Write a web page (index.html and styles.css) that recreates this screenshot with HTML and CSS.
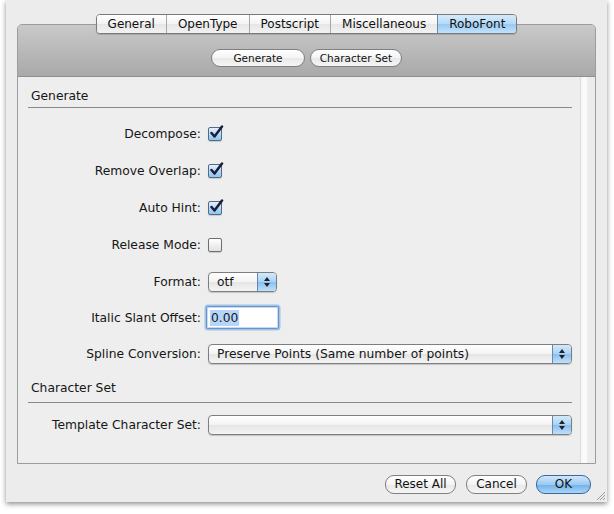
FILE: index.html
```html
<!DOCTYPE html>
<html>
<head>
<meta charset="utf-8">
<link rel="stylesheet" href="styles.css">
</head>
<body>
<div class="window">
  <div class="tabview">
    <div class="header">
      <div class="tabs">
        <span class="tab">General</span>
        <span class="tab">OpenType</span>
        <span class="tab">Postscript</span>
        <span class="tab">Miscellaneous</span>
        <span class="tab sel">RoboFont</span>
      </div>
      <div class="subtabs">
        <span class="pill gen">Generate</span>
        <span class="pill cset">Character Set</span>
      </div>
    </div>
    <div class="body">
      <div class="main">
        <div class="section-title">Generate</div>
        <div class="form">
          <div class="row"><span class="label">Decompose:</span><span class="check on"><svg viewBox="0 0 16 16" width="16" height="16"><path d="M3.5 8 L6.5 11.5 L14 1.5" fill="none" stroke="#1d1d3a" stroke-width="2.5" stroke-linecap="round" stroke-linejoin="round"/></svg></span></div>
          <div class="row"><span class="label">Remove Overlap:</span><span class="check on"><svg viewBox="0 0 16 16" width="16" height="16"><path d="M3.5 8 L6.5 11.5 L14 1.5" fill="none" stroke="#1d1d3a" stroke-width="2.5" stroke-linecap="round" stroke-linejoin="round"/></svg></span></div>
          <div class="row"><span class="label">Auto Hint:</span><span class="check on"><svg viewBox="0 0 16 16" width="16" height="16"><path d="M3.5 8 L6.5 11.5 L14 1.5" fill="none" stroke="#1d1d3a" stroke-width="2.5" stroke-linecap="round" stroke-linejoin="round"/></svg></span></div>
          <div class="row"><span class="label">Release Mode:</span><span class="check"></span></div>
          <div class="row r-format"><span class="label">Format:</span><span class="popup small"><span class="ptext">otf</span><span class="stepper"><svg viewBox="0 0 8 12" width="8" height="12"><path d="M4 1 L7 5 L1 5 Z M4 11 L7 7 L1 7 Z" fill="#222"/></svg></span></span></div>
          <div class="row r-offset"><span class="label">Italic Slant Offset:</span><span class="field"><span class="sel-text">0.00</span></span></div>
          <div class="row r-spline"><span class="label">Spline Conversion:</span><span class="popup wide"><span class="ptext">Preserve Points (Same number of points)</span><span class="stepper"><svg viewBox="0 0 8 12" width="8" height="12"><path d="M4 1 L7 5 L1 5 Z M4 11 L7 7 L1 7 Z" fill="#222"/></svg></span></span></div>
        </div>
        <div class="section-title cs">Character Set</div>
        <div class="form">
          <div class="row r-template"><span class="label">Template Character Set:</span><span class="popup wide"><span class="ptext"></span><span class="stepper"><svg viewBox="0 0 8 12" width="8" height="12"><path d="M4 1 L7 5 L1 5 Z M4 11 L7 7 L1 7 Z" fill="#222"/></svg></span></span></div>
        </div>
      </div>
      <div class="strip"></div>
    </div>
  </div>
  <div class="footer">
    <span class="pill btn reset">Reset All</span>
    <span class="pill btn cancel">Cancel</span>
    <span class="pill btn ok">OK</span>
  </div>
  <svg class="grip" viewBox="0 0 12 12" width="12" height="12"><path d="M11 3 L3 11 M11 6 L6 11 M11 9 L9 11" stroke="#9a9a9a" stroke-width="1"/></svg>
</div>
</body>
</html>
```

FILE: styles.css
```css
* { box-sizing: border-box; }
html, body { margin: 0; padding: 0; background: #ffffff; }
body {
  font-family: "DejaVu Sans", "Liberation Sans", sans-serif;
  font-size: 12px;
  color: #161616;
  width: 614px;
  height: 514px;
  overflow: hidden;
}
.window {
  position: relative;
  margin-left: 6px;
  width: 601px;
  height: 502px;
  background: #ececec;
  box-shadow: 0 2px 5px rgba(0,0,0,0.45);
  padding-top: 24px;
}
.tabview {
  margin-left: 11px;
  width: 579px;
  border: 1px solid #9c9c9c;
  border-radius: 5px 5px 0 0;
  display: flex;
  flex-direction: column;
}
.header {
  height: 52px;
  background: linear-gradient(#c9c9c9, #a9a9a9);
  border-radius: 4px 4px 0 0;
  border-bottom: 1px solid #8f8f8f;
  display: flex;
  flex-direction: column;
  align-items: center;
}
.tabs {
  margin-top: -11px;
  display: flex;
  height: 20px;
  border: 1px solid #7a7a7a;
  border-radius: 4px;
  overflow: hidden;
  box-shadow: 0 1px 1px rgba(0,0,0,0.15);
}
.tab {
  height: 18px;
  line-height: 18px;
  padding: 0 11px;
  background: linear-gradient(#ffffff 0%, #f3f3f3 50%, #e6e6e6 51%, #f2f2f2 100%);
  border-left: 1px solid #a8a8a8;
  color: #111;
  white-space: nowrap;
}
.tab:first-child { border-left: none; padding-left: 11px; }
.tab.sel {
  background: linear-gradient(#d6ebfb 0%, #b5d9f7 50%, #98c9f2 51%, #c2e2fb 100%);
  border-left-color: #6d88a8;
}
.subtabs {
  margin-top: 15px;
  display: flex;
  gap: 5px;
}
.pill {
  display: inline-block;
  height: 18px;
  line-height: 16px;
  border: 1px solid #7f7f7f;
  border-radius: 9px;
  background: linear-gradient(#ffffff 0%, #f4f4f4 50%, #e8e8e8 51%, #f6f6f6 100%);
  text-align: center;
  font-size: 10.5px;
  color: #111;
  padding: 0;
  white-space: nowrap;
}
.pill.gen { width: 94px; }
.pill.cset { width: 92px; }
.body {
  display: flex;
  height: 386px;
  background: #eeeeee;
}
.main {
  width: 562px;
  padding-top: 11px;
}
.strip {
  flex: 1;
  border-left: 1px solid #dedede;
  background: linear-gradient(to right, #f6f6f6 0, #fbfbfb 3px, #fbfbfb 5px, #ececec 7px, #ececec 100%);
}
.section-title {
  margin: 0 8px 0 10px;
  padding: 0 0 3px 3px;
  line-height: 16px;
  border-bottom: 1px solid #8a8a8a;
  font-size: 12.3px;
}
.section-title.cs { margin-top: 0; padding-bottom: 6px; }
.form {
  display: flex;
  flex-direction: column;
  padding-top: 16px;
}
.row {
  display: grid;
  grid-template-columns: 183px auto;
  column-gap: 7px;
  align-items: center;
  height: 20px;
  margin-bottom: 17px;
}
.row.r-format { margin-bottom: 14px; }
.row.r-offset { height: 23px; margin-bottom: 14px; column-gap: 5px; }
.row.r-spline { height: 21px; margin-bottom: 16px; }
.row.r-template { margin-top: -4px; }
.label {
  text-align: right;
  white-space: nowrap;
  font-size: 12.3px;
}
.check {
  position: relative;
  width: 14px;
  height: 14px;
  border: 1px solid #6e6e6e;
  border-radius: 2px;
  background: linear-gradient(#ffffff, #e2e2e2);
  box-shadow: 0 1px 1px rgba(0,0,0,0.15);
}
.check.on {
  background: linear-gradient(#e4f2fc 0%, #b6dbf7 50%, #8cc5f0 100%);
  border-color: #506a8a;
}
.check svg {
  position: absolute;
  left: -1px;
  top: -3px;
}
.popup {
  display: flex;
  height: 20px;
  border: 1px solid #7e7e7e;
  border-radius: 4px;
  background: linear-gradient(#ffffff 0%, #f3f3f3 50%, #e5e5e5 51%, #f4f4f4 100%);
  overflow: hidden;
  box-shadow: 0 1px 1px rgba(0,0,0,0.18);
}
.popup.small { width: 69px; }
.popup.wide { width: 364px; }
.ptext {
  flex: 1;
  padding-left: 8px;
  line-height: 18px;
  font-size: 12.3px;
}
.stepper {
  width: 19px;
  border-left: 1px solid #6b87aa;
  background: linear-gradient(#d3e9fb 0%, #a8d2f5 50%, #87bff0 51%, #bfe0fb 100%);
  display: flex;
  align-items: center;
  justify-content: center;
}
.field {
  width: 73px;
  height: 23px;
  border: 1px solid #6f94c4;
  border-radius: 2px;
  box-shadow: 0 0 0 1.5px #9fc2ea, inset 0 0 0 1px #c4dbf3;
  background: #ffffff;
  padding: 3px 0 0 3px;
}
.sel-text {
  display: inline-block;
  background: #b5d5fb;
  line-height: 16px;
  padding: 0 1px;
  font-size: 12.3px;
}
.footer {
  display: flex;
  justify-content: flex-end;
  gap: 9px;
  padding: 11px 16px 0 0;
}
.btn { height: 19px; line-height: 17px; font-size: 12px; padding: 0; }
.btn.reset { width: 71px; }
.btn.cancel { width: 61px; margin-left: 1px; }
.btn.ok {
  width: 55px;
  border-color: #3f6796;
  background: linear-gradient(#cfe7fb 0%, #9ccaf2 50%, #6fb0ea 51%, #a9d5fa 100%);
}
.grip {
  position: absolute;
  right: 1px;
  bottom: 1px;
}
```
